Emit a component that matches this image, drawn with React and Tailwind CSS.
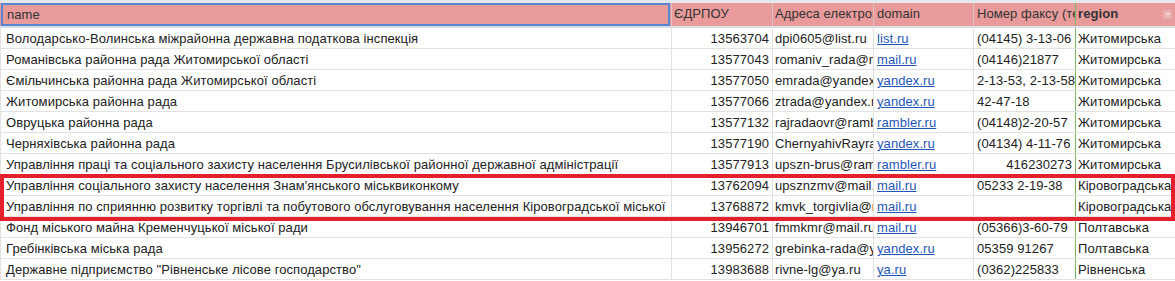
import React from "react";

const rows = [
  ["Володарсько-Волинська міжрайонна державна податкова інспекція", "13563704", "dpi0605@list.ru", "list.ru", "(04145) 3-13-06", false, "Житомирська"],
  ["Романівська районна рада Житомирської області", "13577043", "romaniv_rada@mail.ru", "mail.ru", "(04146)21877", false, "Житомирська"],
  ["Ємільчинська районна рада Житомирської області", "13577050", "emrada@yandex.ru", "yandex.ru", "2-13-53, 2-13-58", false, "Житомирська"],
  ["Житомирська районна рада", "13577066", "ztrada@yandex.ru", "yandex.ru", "42-47-18", false, "Житомирська"],
  ["Овруцька районна рада", "13577132", "rajradaovr@rambler.ru", "rambler.ru", "(04148)2-20-57", false, "Житомирська"],
  ["Черняхівська районна рада", "13577190", "ChernyahivRayrada@yandex.ru", "yandex.ru", "(04134) 4-11-76", false, "Житомирська"],
  ["Управління праці та соціального захисту населення Брусилівської районної державної адміністрації", "13577913", "upszn-brus@rambler.ru", "rambler.ru", "416230273", true, "Житомирська"],
  ["Управління соціального захисту населення Знам'янського міськвиконкому", "13762094", "upsznzmv@mail.ru", "mail.ru", "05233 2-19-38", false, "Кіровоградська"],
  ["Управління по сприянню розвитку торгівлі та побутового обслуговування населення Кіровоградської міської", "13768872", "kmvk_torgivlia@mail.ru", "mail.ru", "", false, "Кіровоградська"],
  ["Фонд міського майна Кременчуцької міської ради", "13946701", "fmmkmr@mail.ru", "mail.ru", "(05366)3-60-79", false, "Полтавська"],
  ["Гребінківська міська рада", "13956272", "grebinka-rada@yandex.ru", "yandex.ru", "05359 91267", false, "Полтавська"],
  ["Державне підприємство \"Рівненське лісове господарство\"", "13983688", "rivne-lg@ya.ru", "ya.ru", "(0362)225833", false, "Рівненська"],
];

export default function App() {
  return (
    <div
      className="relative w-[1175px] h-[281px] overflow-hidden bg-white text-[13px] text-[#222] tracking-[0.08px]"
      style={{ fontFamily: '"Liberation Sans", Arial, sans-serif' }}
    >
      <div className="h-[3px] bg-[#e4e7ec]" />
      {/* header */}
      <div className="flex h-[23px] bg-[#e99b9b] leading-[21px] text-[#333]">
        <div className="w-[672px] shrink-0 border-r border-[#d8c4c4] pl-px">
          <div className="w-[669px] h-[23px] border-2 border-[#5b84d3] pl-[4px] leading-[20px]">name</div>
        </div>
        <div className="w-[101px] shrink-0 border-r border-[#d8c4c4] pl-[2px] overflow-hidden whitespace-nowrap">ЄДРПОУ</div>
        <div className="w-[101px] shrink-0 border-r border-[#d8c4c4] pl-[2px] overflow-hidden whitespace-nowrap">Адреса електронної пошти</div>
        <div className="w-[100px] shrink-0 border-r border-[#d8c4c4] pl-[3px] overflow-hidden whitespace-nowrap">domain</div>
        <div className="w-[101px] shrink-0 pl-[3px] overflow-hidden whitespace-nowrap">Номер факсу (телефаксу)</div>
        <div className="flex-1 border-l border-[#7bb661] pl-[2px] font-bold whitespace-nowrap flex justify-between pr-[3px]">
          <span>region</span>
          <span className="mt-[7px] w-[9px] h-[9px] border border-[#dcb0b0] bg-[#eeb0b0] flex items-center justify-center">
            <span className="block w-0 h-0 border-l-[3px] border-r-[3px] border-t-[3px] border-l-transparent border-r-transparent border-t-[#f4d4d4]" />
          </span>
        </div>
      </div>
      <div className="h-[2px] bg-[#d9dee6]" />
      {rows.map((r, i) => (
        <div key={i} className="flex h-[21px] border-b border-[#e2e2e2] leading-[21px] whitespace-nowrap font-normal">
          <div className="w-[672px] shrink-0 border-r border-l border-[#e2e2e2] pl-[5px] overflow-hidden">{r[0]}</div>
          <div className="w-[101px] shrink-0 border-r border-[#e2e2e2] pr-[3px] text-right overflow-hidden">{r[1]}</div>
          <div className="w-[101px] shrink-0 border-r border-[#e2e2e2] pl-[2px] overflow-hidden">{r[2]}</div>
          <div className="w-[100px] shrink-0 border-r border-[#e2e2e2] pl-[3px] overflow-hidden">
            <span className="text-[#1f56b8] underline">{r[3]}</span>
          </div>
          <div className={`w-[101px] shrink-0 pl-[3px] pr-[3px] overflow-hidden ${r[5] ? "text-right" : ""}`}>{r[4]}</div>
          <div className="flex-1 border-l border-[#7bb661] pl-[2px] overflow-hidden font-normal">{r[6]}</div>
        </div>
      ))}
      <div className="absolute left-0 top-[174px] w-[1175px] h-[47px] border-4 border-[#e3202b]" />
    </div>
  );
}
